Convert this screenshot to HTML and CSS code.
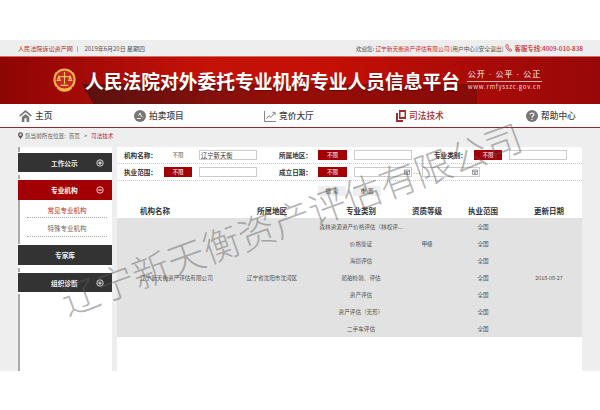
FILE: index.html
```html
<!DOCTYPE html>
<html>
<head>
    <title>人民法院对外委托专业机构专业人员信息平台</title>
    <link rel="stylesheet" href="styles.css">
</head>
<body>
    <div class="topbar">
        <div class="topbar-left">
            <span class="site-name">人民法院诉讼资产网</span>
            <span class="divider">|</span>
            <span class="today">2019年6月20日 星期四</span>
        </div>
        <div class="topbar-right">
            <span>欢迎您:</span>
            <span class="red">辽宁新天衡资产评估有限公司</span>
            <span>[用户中心][安全退出]</span>
            <svg class="phone-icon" viewBox="0 0 8 8">
                <path d="M1.5 .8 C.6 1.4 .7 3 2 4.8 C3.4 6.6 5 7.6 6.2 7 L6.8 6.2 L5.4 4.9 L4.6 5.3 C3.8 4.7 3.2 3.9 2.9 3 L3.5 2.3 L2.5 .5 Z" fill="none" stroke="#b3282d" stroke-width=".8"/>
            </svg>
            <span class="red hotline">客服专线:4009-010-838</span>
        </div>
    </div>

    <div class="banner">
        <svg class="emblem" viewBox="0 0 24 27">
            <path d="M3 20 C0 15 0 8 3 4 L5 6 C3 10 3 15 5 18 Z" fill="#e2a72e"/>
            <path d="M21 20 C24 15 24 8 21 4 L19 6 C21 10 21 15 19 18 Z" fill="#e2a72e"/>
            <circle cx="12" cy="12" r="10.5" fill="#c9262a" stroke="#eeb648" stroke-width="2"/>
            <path d="M12 4 V17 M6 9 H18 M6 9 L4.5 13 H7.5 Z M18 9 L16.5 13 H19.5 Z M8 18 H16" stroke="#f3c65c" stroke-width="1.2" fill="none"/>
            <path d="M4 21 C8 26 16 26 20 21 L17 20 C14 22 10 22 7 20 Z" fill="#eeb648"/>
        </svg>
        <h1 class="banner-title">人民法院对外委托专业机构专业人员信息平台</h1>
        <div class="slogan">
            <div class="slogan-top">公开 · 公平 · 公正</div>
            <div class="slogan-url">www.rmfysszc.gov.cn</div>
        </div>
    </div>

    <div class="nav">
        <a class="nav-item">
            <svg class="nav-icon home-icon" viewBox="0 0 14 13"><path d="M7 0 L14 6 L12.6 7 L7 2.4 L1.4 7 L0 6 Z M3 7.6 L7 4.2 L11 7.6 V13 H8.2 V9 H5.8 V13 H3 Z" fill="#777"/></svg>
            主页
        </a>
        <a class="nav-item">
            <svg class="nav-icon" viewBox="0 0 12 12"><circle cx="6" cy="6" r="6" fill="#777"/><path d="M3 8.5 H7 M5 3 L7.5 5.5 M4.2 5.4 L6.8 3 M6 4.5 L9 7.5" stroke="#eee" stroke-width="1" fill="none"/></svg>
            拍卖项目
        </a>
        <a class="nav-item">
            <svg class="nav-icon" viewBox="0 0 13 13"><path d="M.5 1 V12.5 H13 M2.5 9.5 L5.5 6 L7.5 8 L11.5 3 M9 2.5 H12 V5.5" stroke="#777" stroke-width="1" fill="none"/></svg>
            竞价大厅
        </a>
        <a class="nav-item active">
            <svg class="nav-icon law-icon" viewBox="0 0 10 12"><path d="M3 0 H10 V9 H3 Z M4.5 2 V7 H8.5 V2 Z M0 3 H2 V10 H7 V12 H0 Z" fill="#a3292c"/></svg>
            司法技术
        </a>
        <a class="nav-item">
            <svg class="nav-icon" viewBox="0 0 12 12"><circle cx="6" cy="6" r="6" fill="#777"/><path d="M4 4.6 C4 2.6 8 2.6 8 4.6 C8 6 6 5.8 6 7.4" stroke="#eee" stroke-width="1.3" fill="none"/><circle cx="6" cy="9.2" r=".8" fill="#eee"/></svg>
            帮助中心
        </a>
    </div>

    <div class="content">
        <div class="breadcrumb">
            <svg class="pin" viewBox="0 0 6 8"><path d="M3 0 C1.2 0 0 1.3 0 3 C0 4.6 3 8 3 8 C3 8 6 4.6 6 3 C6 1.3 4.8 0 3 0 Z M3 1.6 A1.4 1.4 0 1 1 3 4.4 A1.4 1.4 0 1 1 3 1.6 Z" fill="#555" fill-rule="evenodd"/></svg>
            <span>您当前所在位置:</span>
            <span class="crumb-home">首页</span>
            <span class="crumb-sep">&gt;</span>
            <span class="crumb-current">司法技术</span>
        </div>

        <div class="columns">
            <div class="sidebar">
                <div class="stripe stripe-top"></div>
                <div class="side-head">
                    <span>工作公示</span>
                    <svg class="side-icon" viewBox="0 0 8 8"><circle cx="4" cy="4" r="3.2" fill="none" stroke="#fff" stroke-width=".8"/><path d="M2.2 4 H5.8 M4 2.2 V5.8" stroke="#fff"/></svg>
                </div>
                <div class="stripe"></div>
                <div class="side-head side-head-active">
                    <span>专业机构</span>
                    <svg class="side-icon" viewBox="0 0 8 8"><circle cx="4" cy="4" r="3.2" fill="none" stroke="#fff" stroke-width=".8"/><path d="M2.2 4 H5.8" stroke="#fff"/></svg>
                </div>
                <div class="side-sub">
                    <div class="side-link current">常见专业机构</div>
                    <div class="side-link">特殊专业机构</div>
                </div>
                <div class="side-head side-head-plain"><span>专家库</span></div>
                <div class="stripe"></div>
                <div class="side-head">
                    <span>组织诊断</span>
                    <svg class="side-icon" viewBox="0 0 8 8"><circle cx="4" cy="4" r="3.2" fill="none" stroke="#fff" stroke-width=".8"/><path d="M2.2 4 H5.8 M4 2.2 V5.8" stroke="#fff"/></svg>
                </div>
                <div class="side-rest"></div>
            </div>

            <div class="main">
                <div class="filter-row">
                    <label class="filter-label">机构名称：</label>
                    <span class="tag tag-plain">不限</span>
                    <input class="filter-input" type="text" value="辽宁新天衡">
                    <label class="filter-label gap-left">所属地区：</label>
                    <span class="tag">不限</span>
                    <input class="filter-input" type="text">
                    <label class="filter-label gap-left">专业类别：</label>
                    <span class="tag">不限</span>
                    <input class="filter-input" type="text">
                </div>
                <div class="filter-row">
                    <label class="filter-label">执业范围：</label>
                    <span class="tag">不限</span>
                    <input class="filter-input" type="text">
                    <label class="filter-label gap-left">成立日期：</label>
                    <span class="tag">不限</span>
                    <div class="date-range">
                        <div class="date-box">
                            <svg class="cal-icon" viewBox="0 0 6 6"><path d="M.5 1 H5.5 V5.5 H.5 Z M.5 2.4 H5.5 M2 3.6 H4 M2 4.6 H4" stroke="#777" stroke-width=".7" fill="none"/></svg>
                        </div>
                        <span class="date-sep">---</span>
                        <div class="date-box">
                            <svg class="cal-icon" viewBox="0 0 6 6"><path d="M.5 1 H5.5 V5.5 H.5 Z M.5 2.4 H5.5 M2 3.6 H4 M2 4.6 H4" stroke="#777" stroke-width=".7" fill="none"/></svg>
                        </div>
                    </div>
                </div>

                <div class="actions">
                    <span class="btn">搜 索</span>
                    <span class="btn">重 置</span>
                </div>

                <table class="result-table">
                    <colgroup>
                        <col class="col-name">
                        <col class="col-area">
                        <col class="col-type">
                        <col class="col-level">
                        <col class="col-scope">
                        <col class="col-date">
                    </colgroup>
                    <thead>
                        <tr>
                            <th class="cell-name">机构名称</th>
                            <th>所属地区</th>
                            <th>专业类别</th>
                            <th>资质等级</th>
                            <th>执业范围</th>
                            <th>更新日期</th>
                        </tr>
                    </thead>
                    <tbody>
                        <tr>
                            <td class="cell-name" rowspan="7">辽宁新天衡资产评估有限公司</td>
                            <td rowspan="7">辽宁省沈阳市沈河区</td>
                            <td>森林资源资产价格评估（林权评...</td>
                            <td rowspan="3">甲级</td>
                            <td>全国</td>
                            <td class="cell-date" rowspan="7">2018-08-27</td>
                        </tr>
                        <tr><td>价格鉴证</td><td>全国</td></tr>
                        <tr><td>海损评估</td><td>全国</td></tr>
                        <tr><td>船舶检验、评估</td><td></td><td>全国</td></tr>
                        <tr><td>资产评估</td><td></td><td>全国</td></tr>
                        <tr><td>资产评估（无形）</td><td></td><td>全国</td></tr>
                        <tr><td>二手车评估</td><td></td><td>全国</td></tr>
                    </tbody>
                </table>
            </div>
        </div>
    </div>

    <div class="watermark">辽宁新天衡资产评估有限公司</div>
</body>
</html>
```

FILE: styles.css
```css
* {
    box-sizing: border-box;
}

html,
body {
    margin: 0;
    height: 410px;
    overflow: hidden;
}

body {
    padding-top: 40px;
    background-color: #fff;
    color: #444;
    font-family: "Noto Sans CJK SC", "Liberation Sans", sans-serif;
    font-size: 6px;
    position: relative;
}

.red {
    color: #c9282d;
}

/* top bar */
.topbar {
    height: 16px;
    padding: 0 17px 0 18px;
    background-color: #eee;
    display: flex;
    justify-content: space-between;
    align-items: center;
    font-size: 5.7px;
    color: #555;
}

.topbar-left,
.topbar-right {
    display: flex;
    align-items: center;
}

.site-name {
    font-size: 6.1px;
    color: #b3282d;
}

.divider {
    margin: 0 6px 0 4px;
    color: #333;
}

.today {
    font-size: 6px;
}

.topbar-right span + span {
    margin-left: 1px;
}

.phone-icon {
    width: 8px;
    height: 8px;
    margin: 0 2px 0 1px;
}

.topbar-right .hotline {
    font-size: 6.4px;
    font-weight: 500;
    margin-left: 0;
}

/* banner */
.banner {
    height: 48px;
    position: relative;
    overflow: hidden;
    display: flex;
    align-items: center;
    padding-left: 53px;
    background: linear-gradient(90deg, #8e0505 0%, #c41208 35%, #c40f05 55%, #a80b08 80%, #980808 100%);
    border-top: 1px solid #d96a66;
    color: #fff;
}

.banner::before {
    content: "";
    position: absolute;
    left: 82px;
    top: 27px;
    width: 395px;
    height: 21px;
    background: linear-gradient(90deg, rgba(60, 20, 20, .7), rgba(90, 10, 10, .45) 50%, rgba(80, 10, 10, .4));
    clip-path: polygon(0 0, 100% 0, 100% 0, 100% 100%, 3% 100%);
}

.emblem {
    width: 23px;
    height: 26px;
    position: relative;
}

.banner-title {
    margin: 0 0 0 9px;
    position: relative;
    font-size: 18.75px;
    font-weight: bold;
    white-space: nowrap;
    text-shadow: 0 1px 1px rgba(60, 0, 0, .5);
}

.slogan {
    position: relative;
    margin-left: 7px;
    width: 75px;
    text-align: center;
}

.slogan-top {
    font-family: "Liberation Serif", "Noto Sans CJK SC", serif;
    font-size: 8px;
    line-height: 11px;
    letter-spacing: 1px;
    padding-bottom: 1px;
    border-bottom: 1px solid #e8b0ae;
    white-space: nowrap;
}

.slogan-url {
    font-size: 6px;
    line-height: 10px;
    letter-spacing: .7px;
    white-space: nowrap;
    color: #f3d6d5;
}

/* nav */
.nav {
    height: 24px;
    padding-left: 19px;
    background-color: #fff;
    border-bottom: 1px solid #8e2a2e;
    display: grid;
    grid-template-columns: 115px 130px 132px 130px 1fr;
    align-items: center;
}

.nav-item {
    display: flex;
    align-items: center;
    gap: 3px;
    font-size: 8.7px;
    font-weight: 500;
    color: #444;
}

.nav-item.active {
    color: #a3292c;
}

.nav-icon {
    width: 12px;
    height: 12px;
}

.home-icon {
    width: 13px;
}

.law-icon {
    width: 10px;
}

/* content */
.content {
    height: 243px;
    padding-left: 18px;
    background-color: #eee;
}

.breadcrumb {
    height: 19px;
    padding-bottom: 4px;
    display: flex;
    align-items: center;
    font-size: 5.6px;
    color: #666;
}

.pin {
    width: 5px;
    height: 7px;
    margin-right: 2px;
}

.crumb-home {
    margin-left: 3px;
}

.crumb-sep {
    margin: 0 4px;
}

.crumb-current {
    color: #b3282d;
}

.columns {
    display: flex;
    gap: 5px;
    height: 224px;
}

/* sidebar */
.sidebar {
    width: 94px;
    background-color: #fff;
    display: flex;
    flex-direction: column;
}

.stripe {
    width: 2px;
    height: 4px;
    margin: 3px 0 1px;
    background-color: #aaa;
}

.stripe-top {
    height: 5px;
    margin: 0 0 1px;
}

.side-head {
    height: 19px;
    padding: 0 8px 0 33px;
    background-color: #333;
    color: #eee;
    display: flex;
    justify-content: space-between;
    align-items: center;
    font-size: 6.7px;
    font-weight: bold;
    flex-shrink: 0;
}

.side-head-active {
    height: 20px;
    background-color: #a30006;
    color: #fff;
}

.side-head-plain {
    height: 20px;
    margin-top: 1px;
    padding: 0;
    justify-content: center;
}

.side-icon {
    width: 8px;
    height: 8px;
}

.side-sub {
    height: 44px;
    padding: 0 5px 0 7px;
    border-left: 2px solid #aaa;
    background-color: #fff;
}

.side-link {
    height: 19px;
    border-bottom: 1px dotted #aaa;
    line-height: 21px;
    text-align: center;
    font-size: 6.5px;
    color: #666;
}

.side-link.current {
    height: 18px;
    line-height: 20px;
    color: #b3282d;
}

.side-rest {
    flex: 1;
    margin-top: 2px;
    border-left: 2px solid #aaa;
}

/* filter area */
.main {
    width: 465px;
    background-color: #fff;
}

.filter-row {
    height: 17px;
    padding-left: 7px;
    border-bottom: 1px dotted #ccc;
    display: grid;
    grid-template-columns: 33px 28px 58px 47px 29px 58px 48px 28px 58px;
    column-gap: 7px;
    align-items: center;
}

.filter-label {
    font-size: 6.6px;
    font-weight: bold;
    color: #333;
    white-space: nowrap;
}

.gap-left {
    padding-left: 15px;
}

.tag {
    height: 10px;
    background-color: #a30006;
    color: #fff;
    font-size: 5.6px;
    line-height: 10px;
    text-align: center;
}

.tag-plain {
    background-color: transparent;
    color: #666;
}

.filter-input {
    width: 58px;
    height: 10px;
    padding: 0 1px;
    border: 1px solid #ccc;
    background-color: #fff;
    font-family: inherit;
    font-size: 6.3px;
    color: #333;
    outline: none;
}

.date-range {
    grid-column: span 3;
    display: flex;
    align-items: center;
}

.date-box {
    width: 58px;
    height: 10px;
    padding-right: 1px;
    border: 1px solid #ccc;
    display: flex;
    justify-content: flex-end;
    align-items: center;
}

.date-sep {
    width: 10px;
    text-align: center;
    color: #666;
    letter-spacing: .5px;
}

.cal-icon {
    width: 6px;
    height: 6px;
}

.actions {
    height: 16px;
    padding: 5px 0 0 201px;
    display: flex;
    gap: 7px;
}

.btn {
    width: 28px;
    height: 10px;
    background-color: #eee;
    font-size: 5.8px;
    line-height: 10px;
    text-align: center;
    color: #444;
}

/* results */
.result-table {
    width: 465px;
    table-layout: fixed;
    border-collapse: collapse;
}

.col-name {
    width: 109px;
}

.col-area {
    width: 92px;
}

.col-type {
    width: 86px;
}

.col-level {
    width: 46px;
}

.col-scope {
    width: 66px;
}

.col-date {
    width: 66px;
}

.result-table th {
    height: 21px;
    padding: 5px 0 0;
    font-size: 7.5px;
    font-weight: bold;
    color: #333;
}

.result-table td {
    height: 17px;
    padding: 0;
    background-color: #e2e2e2;
    font-size: 5.6px;
    text-align: center;
    color: #555;
    white-space: nowrap;
}

.result-table .cell-name {
    padding-left: 23px;
    text-align: left;
}

.result-table .cell-date {
    font-size: 5.4px;
}

/* watermark */
.watermark {
    position: absolute;
    left: 291px;
    top: 217px;
    transform: translate(-50%, -50%) rotate(-20deg);
    font-size: 37.5px;
    font-weight: 300;
    line-height: 1;
    color: rgba(90, 90, 90, .45);
    white-space: nowrap;
    pointer-events: none;
}
```
